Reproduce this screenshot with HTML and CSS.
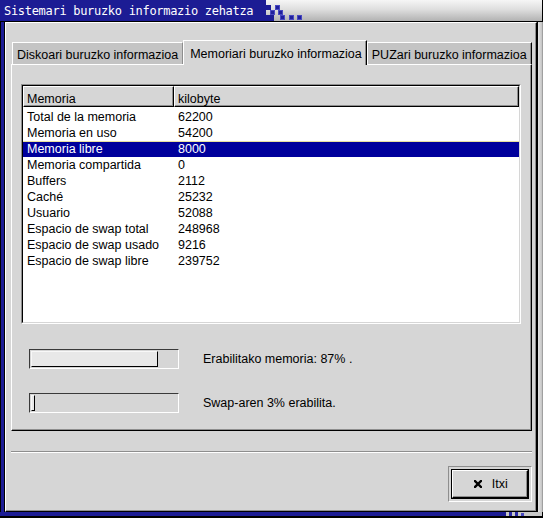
FILE: index.html
```html
<!DOCTYPE html>
<html>
<head>
<meta charset="utf-8">
<link rel="stylesheet" href="styles.css">
</head>
<body>
<div class="win">
  <div class="titlebar">
    <div class="title-blue">Sistemari buruzko informazio zehatza</div>
    <svg class="title-pix" width="50" height="21" viewBox="0 0 50 21">
      <rect x="0" y="0" width="10" height="21" fill="#1c1c94"/>
      <rect x="10" y="5" width="5" height="5" fill="#1c1c94"/>
      <rect x="10" y="15" width="8" height="6" fill="#1c1c94"/>
      <g fill="#20209c" stroke="#4848c0" stroke-width="1">
        <rect x="19.5" y="5.5" width="4" height="4"/>
        <rect x="14.5" y="10.5" width="4" height="4"/>
        <rect x="22.5" y="10.5" width="4" height="4"/>
        <rect x="24.5" y="15.5" width="4" height="4"/>
        <rect x="33.5" y="15.5" width="4" height="4"/>
        <rect x="41.5" y="15.5" width="4" height="4"/>
      </g>
    </svg>
  </div>
  <div class="mid">
    <div class="lborder"></div>
    <div class="client">
      <div class="notebook">
        <div class="tabs">
          <div class="tab tab-first">Diskoari buruzko informazioa</div>
          <div class="tab tab-active">Memoriari buruzko informazioa</div>
          <div class="tab tab-last">PUZari buruzko informazioa</div>
        </div>
        <div class="page">
          <div class="list">
            <div class="list-inner">
              <div class="list-head">
                <div class="hcell hcell-first">Memoria</div>
                <div class="hcell hcell-last">kilobyte</div>
              </div>
              <div class="rows">
                <div class="row"><span>Total de la memoria</span><span>62200</span></div>
                <div class="row"><span>Memoria en uso</span><span>54200</span></div>
                <div class="row row-sel"><span>Memoria libre</span><span>8000</span></div>
                <div class="row"><span>Memoria compartida</span><span>0</span></div>
                <div class="row"><span>Buffers</span><span>2112</span></div>
                <div class="row"><span>Caché</span><span>25232</span></div>
                <div class="row"><span>Usuario</span><span>52088</span></div>
                <div class="row"><span>Espacio de swap total</span><span>248968</span></div>
                <div class="row"><span>Espacio de swap usado</span><span>9216</span></div>
                <div class="row"><span>Espacio de swap libre</span><span>239752</span></div>
              </div>
            </div>
          </div>
          <div class="meter meter-first">
            <div class="bar"><div class="fill" style="width:87%"></div></div>
            <div class="meter-label">Erabilitako memoria: 87% .</div>
          </div>
          <div class="meter">
            <div class="bar"><div class="fill" style="width:3%"></div></div>
            <div class="meter-label">Swap-aren 3% erabilita.</div>
          </div>
        </div>
      </div>
      <div class="separator"></div>
      <div class="actions">
        <div class="btn-frame">
          <div class="btn">
            <svg class="btn-icon" width="8" height="8" viewBox="0 0 8 8">
              <path d="M1 1 L7 7 M7 1 L1 7" stroke="#000" stroke-width="2.4" stroke-linecap="square"/>
            </svg>
            <span>Itxi</span>
          </div>
        </div>
      </div>
    </div>
    <div class="rborder"></div>
  </div>
  <div class="bborder">
    <div class="bb-blue"></div>
    <svg class="bb-pix" width="30" height="6" viewBox="0 0 30 6">
      <rect x="0" y="0" width="30" height="4" fill="#c8c8c8"/>
      <rect x="0" y="0" width="6" height="4" fill="#1c1c94"/>
      <rect x="9" y="0" width="3" height="4" fill="#2a2aa8"/>
      <rect x="15" y="0" width="3" height="4" fill="#2a2aa8"/>
      <rect x="21" y="1" width="3" height="3" fill="#4848c0"/>
      <rect x="0" y="4" width="30" height="2" fill="#000"/>
    </svg>
    <div class="bb-gray"></div>
  </div>
</div>
</body>
</html>
```

FILE: styles.css
```css
* { box-sizing: border-box; }

html, body {
  margin: 0;
  padding: 0;
  background: #000;
}

body {
  font-family: "Liberation Sans", Arial, sans-serif;
  font-size: 12.5px;
  color: #000;
}

.win {
  width: 543px;
  height: 518px;
  display: flex;
  flex-direction: column;
  background: #000;
  overflow: hidden;
}

/* title bar */
.titlebar {
  height: 21px;
  flex: none;
  display: flex;
  background: linear-gradient(#f6f6f6, #dedede 45%, #b2b2b2);
  box-shadow: inset -1px 0 0 #000;
}

.title-blue {
  width: 256px;
  flex: none;
  background: #1c1c94;
  color: #fff;
  font-family: "DejaVu Sans Mono", monospace;
  font-size: 12px;
  letter-spacing: -0.3px;
  line-height: 20px;
  padding: 1px 0 0 4px;
  white-space: nowrap;
  overflow: hidden;
}

.title-pix {
  display: block;
  flex: none;
}

/* middle */
.mid {
  flex: 1;
  display: flex;
  border-top: 1px solid #000;
  min-height: 0;
}

.lborder {
  width: 5px;
  flex: none;
  background: #1c1c94;
  border-left: 1px solid #000;
  border-right: 1px solid #000;
}

.rborder {
  width: 7px;
  flex: none;
  border-left: 1px solid #000;
  border-right: 1px solid #000;
  background: linear-gradient(to right, #e6e6e6, #c8c8c8 70%, #8c8c8c);
}

.client {
  flex: 1;
  background: #d6d6d6;
  border-left: 1px solid #fff;
  border-top: 1px solid #fff;
  border-right: 1px solid #000;
  border-bottom: 1px solid #000;
  box-shadow: inset -1px -1px 0 #8e8e8e;
  padding: 17px 4px 9px 5px;
  display: flex;
  flex-direction: column;
}

/* notebook */
.notebook {
  display: flex;
  flex-direction: column;
}

.tabs {
  height: 24px;
  display: flex;
  align-items: flex-end;
  padding-left: 1px;
  position: relative;
  z-index: 1;
}

.tab {
  white-space: nowrap;
  line-height: 14px;
  border-left: 1px solid #fff;
  border-top: 1px solid #fff;
  border-right: 1px solid #000;
}

.tab-first, .tab-last {
  height: 22px;
  background: #c4c4c4;
  padding: 5px 4px 0 4px;
  box-shadow: inset -1px 0 0 #8e8e8e;
}

.tab-first {
  border-right-color: #8e8e8e;
  box-shadow: none;
}

.tab-active {
  height: 25px;
  margin-bottom: -1px;
  background: #d6d6d6;
  padding: 6px 4px 0 6px;
  box-shadow: inset -1px 0 0 #8e8e8e;
}

.tab-last {
  width: 165px;
}

.page {
  height: 367px;
  display: flex;
  flex-direction: column;
  border-top: 1px solid #fff;
  border-left: 1px solid #fff;
  border-right: 1px solid #000;
  border-bottom: 1px solid #000;
  box-shadow: inset -1px -1px 0 #8e8e8e;
}

/* list */
.list {
  margin: 19px 0 0 9px;
  width: 500px;
  height: 240px;
  border: 1px solid;
  border-color: #8e8e8e #fff #fff #8e8e8e;
}

.list-inner {
  height: 100%;
  border: 1px solid;
  border-color: #000 #d6d6d6 #d6d6d6 #000;
  background: #fff;
}

.list-head {
  display: flex;
  height: 21px;
}

.hcell {
  background: #d6d6d6;
  line-height: 14px;
  padding: 5px 0 0 3px;
  border-left: 1px solid #fff;
  border-top: 1px solid #fff;
  border-right: 1px solid #000;
  border-bottom: 1px solid #000;
  box-shadow: inset -1px -1px 0 #8e8e8e;
  white-space: nowrap;
}

.hcell-first {
  width: 151px;
}

.hcell-last {
  flex: 1;
}

.rows {
  padding-top: 2px;
}

.row {
  display: grid;
  grid-template-columns: 151px 1fr;
  height: 16px;
  line-height: 16px;
  white-space: nowrap;
}

.row span {
  padding-left: 4px;
}

.row-sel {
  background: #00009c;
  color: #fff;
  box-shadow: inset 0 1px 0 #e8e0a0;
}

/* meters */
.meter {
  display: flex;
  align-items: center;
  gap: 24px;
  margin: 24px 0 0 17px;
  height: 20px;
}

.meter-first {
  margin-top: 25px;
}

.bar {
  width: 150px;
  height: 20px;
  flex: none;
  padding: 1px;
  border: 1px solid;
  border-color: #3a3a3a #fff #fff #3a3a3a;
  background: #d6d6d6;
}

.fill {
  height: 100%;
  background: #e8e8e8;
  border: 1px solid;
  border-color: #f8f8f8 #000 #000 #f8f8f8;
}

.meter-label {
  line-height: 15px;
  white-space: nowrap;
}

/* bottom */
.separator {
  margin-top: 20px;
  height: 2px;
  border-top: 1px solid #8e8e8e;
  border-bottom: 1px solid #fff;
}

.actions {
  display: flex;
  justify-content: flex-end;
  margin-top: 13px;
}

.btn-frame {
  width: 84px;
  height: 36px;
  padding: 3px;
  border: 1px solid;
  border-color: #8e8e8e #fff #fff #8e8e8e;
}

.btn-frame .btn {
  height: 100%;
}

.btn {
  display: flex;
  align-items: center;
  justify-content: center;
  gap: 10px;
  padding-left: 2px;
  background: #d6d6d6;
  border: 1px solid;
  border-color: #fff #000 #000 #fff;
  box-shadow: 0 0 0 1px #000, inset -1px -1px 0 #8e8e8e;
  line-height: 15px;
}

.btn-icon {
  display: block;
}

/* bottom border */
.bborder {
  height: 6px;
  flex: none;
  display: flex;
}

.bb-blue {
  flex: 1;
  background: #1c1c94;
  border-bottom: 2px solid #000;
}

.bb-pix {
  display: block;
  flex: none;
}

.bb-gray {
  width: 13px;
  flex: none;
  background: #c8c8c8;
  border-bottom: 2px solid #000;
  border-right: 1px solid #000;
}
```
